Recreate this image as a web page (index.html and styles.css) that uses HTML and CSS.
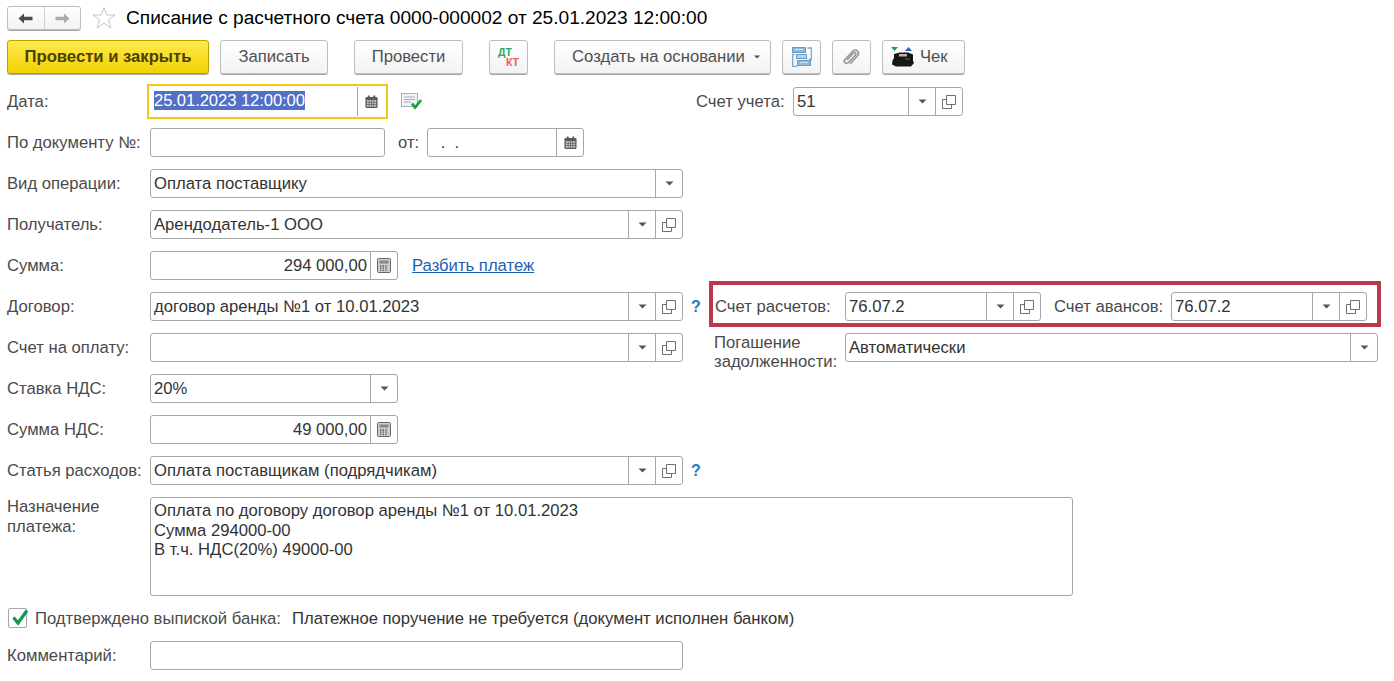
FILE: index.html
```html
<!DOCTYPE html>
<html lang="ru">
<head>
<meta charset="utf-8">
<title>Списание с расчетного счета</title>
<link rel="stylesheet" href="styles.css">
</head>
<body>
<svg class="defs" width="0" height="0">
  <defs>
    <symbol id="tri" viewBox="0 0 9 5"><path d="M0.5 0.5H8.5L4.5 4.5Z" fill="#555"/></symbol>
    <symbol id="copy" viewBox="0 0 14 14"><path d="M4.5 0.5H13.5V9.5H4.5Z" fill="none" stroke="#6e6e6e"/><path d="M4.5 4.5H0.5V13.5H9.5V9.5" fill="none" stroke="#6e6e6e"/></symbol>
    <symbol id="cal" viewBox="0 0 14 14"><rect x="0.5" y="1.5" width="13" height="12" rx="1.5" fill="#5a5a5a"/><rect x="3" y="0" width="2" height="3" fill="#5a5a5a"/><rect x="9" y="0" width="2" height="3" fill="#5a5a5a"/><rect x="2" y="5" width="10" height="7" fill="#d4d4d4"/><path d="M2 7.3H12M2 9.6H12M4.5 5V12M7 5V12M9.5 5V12" stroke="#5f5f5f" stroke-width="0.9"/></symbol>
    <symbol id="calc" viewBox="0 0 14 15"><rect x="0.5" y="0.5" width="13" height="14" rx="1" fill="#cfcfcf" stroke="#666"/><rect x="2.5" y="2.5" width="9" height="3" fill="#888"/><path d="M3 8H11M3 10.2H11M3 12.4H11" stroke="#555" stroke-width="1.3" stroke-dasharray="1.4 1.2"/></symbol>
  </defs>
</svg>

<header class="titlebar">
  <div class="nav">
    <span class="nav-cell"><svg width="15" height="11" viewBox="0 0 15 11"><path d="M6 0.5V3.7H14.5V7.3H6V10.5L0.5 5.5Z" fill="#4a4a4a"/></svg></span>
    <span class="nav-cell nav-off"><svg width="15" height="11" viewBox="0 0 15 11"><path d="M9 0.5V3.7H0.5V7.3H9V10.5L14.5 5.5Z" fill="#ababab"/></svg></span>
  </div>
  <svg class="star" width="24" height="24" viewBox="0 0 24 24"><path d="M12 1.5L14.9 9H23L16.5 13.9L18.9 22L12 17.2L5.1 22L7.5 13.9L1 9H9.1Z" fill="#fff" stroke="#c4c4c4"/></svg>
  <h1 class="title">Списание с расчетного счета 0000-000002 от 25.01.2023 12:00:00</h1>
</header>

<div class="toolbar">
  <button class="btn btn-main w-main">Провести и закрыть</button>
  <button class="btn w-save">Записать</button>
  <button class="btn w-post">Провести</button>
  <button class="btn w-icon ml-dt"><span class="dtkt"><span class="dt">ДТ</span><span class="kt">КТ</span></span></button>
  <button class="btn w-create"><span>Создать на основании</span><svg class="btn-tri" width="8" height="4"><use href="#tri"/></svg></button>
  <button class="btn w-icon">
    <svg width="20" height="20" viewBox="0 0 20 20"><path d="M2.5 7.5H0.7V19.3H5M15.5 1H19.3V12.5H17" fill="none" stroke="#7ba7cb" stroke-width="1.3"/><rect x="0.5" y="0.5" width="13" height="5" fill="#8fb7d6" stroke="#6a9dc5"/><path d="M3 2.5H11" stroke="#cfe2f0"/><rect x="4.5" y="7.5" width="10" height="4" fill="#b7d3e8" stroke="#6a9dc5"/><rect x="5.5" y="13.5" width="13" height="5" fill="#8fb7d6" stroke="#6a9dc5"/><path d="M8 15.5H16" stroke="#cfe2f0"/></svg>
  </button>
  <button class="btn w-icon">
    <svg width="19" height="19" viewBox="0 0 19 19"><path d="M5.5 11.5L11.5 5C13 3.5 15 5.5 13.5 7L6.5 14.5C4 17 .8 13.8 3.2 11.2L11 3C14 0 18.5 4.5 15.5 7.8L8.5 15.5" fill="none" stroke="#969696" stroke-width="1.6" stroke-linecap="round"/></svg>
  </button>
  <button class="btn w-check">
    <svg width="24" height="22" viewBox="0 0 24 22"><path d="M1 1H8L4.5 5Z" fill="#16a05a"/><path d="M15 5L18.5 1L22 5Z" fill="#2d5fb8"/><path d="M4 8L10 6.5H18L23 8.5V15L24 17L21 20.5H6L2 18.5L2.5 14.5L4 12Z" fill="#161616"/><rect x="9" y="8" width="8" height="2.5" fill="#b5b5b5"/><path d="M15 13H20" stroke="#666"/></svg>
    <span>Чек</span>
  </button>
</div>

<main class="form">
  <div class="row">
    <label class="lbl">Дата:</label>
    <div class="focus-ring">
      <div class="field w-date">
        <span class="val val-focus"><span class="sel">25.01.2023 12:00:00</span></span>
        <span class="cell cell-w"><svg width="13" height="14"><use href="#cal"/></svg></span>
      </div>
    </div>
    <svg class="doc-ok" width="21" height="17" viewBox="0 0 21 17"><rect x="0.5" y="0.5" width="16" height="13" fill="#f0f3f5" stroke="#a4b2bd"/><path d="M3 4H14M3 6.5H14M3 9H10" stroke="#a4b2bd"/><path d="M11 10.5L14 14.5L20 7" fill="none" stroke="#17a24a" stroke-width="2.8"/></svg>
    <label class="lbl-acc">Счет учета:</label>
    <div class="field w-acc">
      <span class="val">51</span>
      <span class="cell"><svg width="9" height="5"><use href="#tri"/></svg></span>
      <span class="cell"><svg width="14" height="14"><use href="#copy"/></svg></span>
    </div>
  </div>

  <div class="row">
    <label class="lbl">По документу №:</label>
    <div class="field w-doc"><span class="val"></span></div>
    <label class="lbl-from">от:</label>
    <div class="field w-from">
      <span class="val val-dots">&nbsp;.&nbsp;&nbsp;.</span>
      <span class="cell cell-w"><svg width="13" height="14"><use href="#cal"/></svg></span>
    </div>
  </div>

  <div class="row">
    <label class="lbl">Вид операции:</label>
    <div class="field w-wide">
      <span class="val">Оплата поставщику</span>
      <span class="cell"><svg width="9" height="5"><use href="#tri"/></svg></span>
    </div>
  </div>

  <div class="row">
    <label class="lbl">Получатель:</label>
    <div class="field w-wide">
      <span class="val">Арендодатель-1 ООО</span>
      <span class="cell"><svg width="9" height="5"><use href="#tri"/></svg></span>
      <span class="cell"><svg width="14" height="14"><use href="#copy"/></svg></span>
    </div>
  </div>

  <div class="row">
    <label class="lbl">Сумма:</label>
    <div class="field w-mid">
      <span class="val val-num">294 000,00</span>
      <span class="cell"><svg width="14" height="15"><use href="#calc"/></svg></span>
    </div>
    <a class="link" href="#">Разбить платеж</a>
  </div>

  <div class="row">
    <label class="lbl">Договор:</label>
    <div class="field w-wide">
      <span class="val">договор аренды №1 от 10.01.2023</span>
      <span class="cell"><svg width="9" height="5"><use href="#tri"/></svg></span>
      <span class="cell"><svg width="14" height="14"><use href="#copy"/></svg></span>
    </div>
    <span class="hint">?</span>
    <label class="lbl-right">Счет расчетов:</label>
    <div class="field w-right">
      <span class="val">76.07.2</span>
      <span class="cell"><svg width="9" height="5"><use href="#tri"/></svg></span>
      <span class="cell"><svg width="14" height="14"><use href="#copy"/></svg></span>
    </div>
    <label class="lbl-adv">Счет авансов:</label>
    <div class="field w-right">
      <span class="val">76.07.2</span>
      <span class="cell"><svg width="9" height="5"><use href="#tri"/></svg></span>
      <span class="cell"><svg width="14" height="14"><use href="#copy"/></svg></span>
    </div>
    <div class="red-box"></div>
  </div>

  <div class="row">
    <label class="lbl">Счет на оплату:</label>
    <div class="field w-wide">
      <span class="val"></span>
      <span class="cell"><svg width="9" height="5"><use href="#tri"/></svg></span>
      <span class="cell"><svg width="14" height="14"><use href="#copy"/></svg></span>
    </div>
    <label class="lbl-repay">Погашение задолженности:</label>
    <div class="field w-repay">
      <span class="val">Автоматически</span>
      <span class="cell"><svg width="9" height="5"><use href="#tri"/></svg></span>
    </div>
  </div>

  <div class="row">
    <label class="lbl">Ставка НДС:</label>
    <div class="field w-mid">
      <span class="val">20%</span>
      <span class="cell"><svg width="9" height="5"><use href="#tri"/></svg></span>
    </div>
  </div>

  <div class="row">
    <label class="lbl">Сумма НДС:</label>
    <div class="field w-mid">
      <span class="val val-num">49 000,00</span>
      <span class="cell"><svg width="14" height="15"><use href="#calc"/></svg></span>
    </div>
  </div>

  <div class="row row-last">
    <label class="lbl">Статья расходов:</label>
    <div class="field w-wide">
      <span class="val">Оплата поставщикам (подрядчикам)</span>
      <span class="cell"><svg width="9" height="5"><use href="#tri"/></svg></span>
      <span class="cell"><svg width="14" height="14"><use href="#copy"/></svg></span>
    </div>
    <span class="hint">?</span>
  </div>

  <div class="row-area">
    <label class="lbl lbl-area">Назначение платежа:</label>
    <div class="area">Оплата по договору договор аренды №1 от 10.01.2023<br>Сумма 294000-00<br>В т.ч. НДС(20%) 49000-00</div>
  </div>

  <div class="row-check">
    <span class="checkbox"><svg class="tick" width="18" height="18" viewBox="0 0 18 18"><path d="M2.5 9.5L7 15L16 2.5" fill="none" stroke="#109a50" stroke-width="3.2"/></svg></span>
    <label class="lbl-check">Подтверждено выпиской банка:</label>
    <span class="note">Платежное поручение не требуется (документ исполнен банком)</span>
  </div>

  <div class="row">
    <label class="lbl">Комментарий:</label>
    <div class="field w-wide"><span class="val"></span></div>
  </div>
</main>
</body>
</html>
```

FILE: styles.css
```css
* { box-sizing: border-box; }
html, body { margin: 0; padding: 0; background: #fff; }
body {
  font-family: "Liberation Sans", Arial, sans-serif;
  font-size: 16.67px;
  color: #4a4a4a;
  overflow: hidden;
  height: 681px;
}
.defs { position: absolute; }

.titlebar { display: flex; align-items: center; height: 24px; margin: 6px 0 0 7px; }
.nav {
  display: flex; width: 74px; height: 24px; border: 1px solid #bdbdbd; border-radius: 3px;
  background: linear-gradient(#ffffff, #f2f2f2); box-shadow: 0 1px 0 #a8a8a8;
}
.nav-cell { flex: 1; display: flex; align-items: center; justify-content: center; }
.nav-off { border-left: 1px solid #cfcfcf; }
.star { margin-left: 11px; flex: none; }
.title { margin: 0 0 0 10px; font-size: 19.13px; font-weight: 400; color: #000; white-space: nowrap; }

.toolbar { display: flex; height: 34px; margin: 10px 0 0 7px; }
.btn {
  display: flex; align-items: center; justify-content: center; height: 34px; padding: 0;
  font: inherit; color: #4f4f4f; border: 1px solid #bdbdbd; border-radius: 3px;
  background: linear-gradient(#ffffff, #f3f3f3); box-shadow: 0 1px 0 #a8a8a8;
  margin-right: 11px;
}
.btn-main {
  font-weight: 700; color: #4a4000; border-color: #b8a000;
  background: linear-gradient(#ffe94d, #f2d100);
}
.w-main { width: 202px; }
.w-save { width: 108px; margin-right: 26px; }
.w-post { width: 109px; margin-right: 26px; }
.w-icon { width: 39px; }
.ml-dt { margin-right: 26px; }
.w-create { width: 217px; padding-left: 8px; }
.btn-tri { margin-left: 8px; }
.w-check { width: 83px; gap: 6px; margin-right: 0; justify-content: flex-start; padding-left: 7px; }
.dtkt { display: flex; flex-direction: column; font-size: 10.5px; font-weight: 700; line-height: 10px; width: 21px; }
.dt { color: #2aa866; text-align: left; }
.kt { color: #ea5a64; text-align: right; }

.form { margin-top: 13px; padding-left: 7px; }
.row { position: relative; display: flex; align-items: center; height: 29px; margin-bottom: 12px; }
.lbl { flex: none; width: 143px; }
.field {
  display: flex; flex: none; height: 29px; border: 1px solid #a6a6a6; border-radius: 3px;
  background: #fff; color: #333;
}
.val { flex: 1; min-width: 0; padding-left: 3px; line-height: 27px; white-space: nowrap; }
.val-focus { padding-left: 4px; }
.val-num { text-align: right; padding: 0 3px 0 0; }
.val-dots { padding-left: 8px; }
.cell {
  flex: none; width: 27px; display: flex; align-items: center; justify-content: center;
  border-left: 1px solid #a6a6a6;
}
.cell-w { width: 27px; }

.focus-ring { flex: none; margin-left: -3px; padding: 1px; border: 2px solid #f5c518; height: 35px; display: flex; }
.focus-ring .field { border: 0; height: 29px; }
.focus-ring .cell { width: 28px; padding-right: 1px; }
.sel { background: #5470c6; color: #fff; letter-spacing: -0.1px; }
.w-date { width: 235px; }
.doc-ok { margin-left: 13px; flex: none; }
.lbl-acc { margin-left: 274px; width: 97px; }
.w-acc { width: 170px; }
.w-doc { width: 235px; }
.lbl-from { margin-left: 13px; width: 29px; }
.w-from { width: 157px; }
.w-wide { width: 533px; }
.w-mid { width: 248px; }
.link { margin-left: 14px; color: #1a5fb4; }
.hint { margin-left: 8px; width: 9px; color: #1e7cc0; font-weight: 700; font-size: 16px; }
.lbl-right { margin-left: 15px; width: 130px; }
.w-right { width: 196px; }
.lbl-adv { margin-left: 13px; width: 117px; }
.red-box {
  position: absolute; left: 702px; top: -11px; width: 672px; height: 46px;
  border: 4px solid #b83a4b; pointer-events: none;
}
.lbl-repay { margin-left: 31px; width: 131px; line-height: 19px; align-self: flex-start; }
.w-repay { width: 533px; }

.row-last { margin-bottom: -2px; }
.row-area { display: flex; height: 99px; margin-top: 14px; align-items: flex-start; }
.lbl-area { line-height: 20px; }
.area {
  width: 923px; height: 99px; border: 1px solid #a6a6a6; border-radius: 3px;
  padding: 3px; line-height: 19.5px; color: #333;
}
.row-check { display: flex; align-items: center; height: 20px; margin-top: 12px; margin-bottom: 13px; }
.checkbox {
  flex: none; width: 19px; height: 20px; margin-left: 1px; border: 1px solid #a6a6a6; border-radius: 2px;
  position: relative;
}
.tick { position: absolute; left: 2px; top: -1px; }
.lbl-check { margin-left: 8px; padding-top: 2px; }
.note { margin-left: 11px; padding-top: 2px; color: #333; }
```
